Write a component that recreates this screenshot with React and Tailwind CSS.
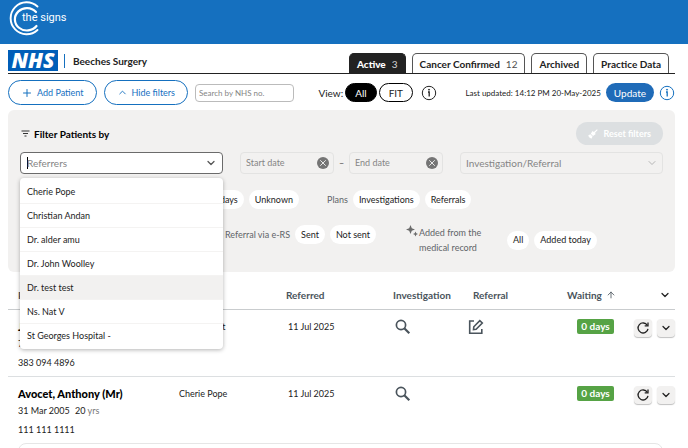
import React, { useState } from 'react'
import { ArrowUp, ChevronDown, ChevronUp, Plus, X } from 'lucide-react'

const referrers = [
  'Cherie Pope',
  'Christian Andan',
  'Dr. alder amu',
  'Dr. John Woolley',
  'Dr. test test',
  'Ns. Nat V',
  'St Georges Hospital -',
]

const tabs = [
  { name: 'Active', count: 3 },
  { name: 'Cancer Confirmed', count: 12 },
  { name: 'Archived' },
  { name: 'Practice Data' },
]

const patients = [
  { name: 'Jay, Alan (Mr)', dob: '7 Jan 1960', age: 65, nhs: '383 094 4896', referrer: 'Dr. test test', referred: '11 Jul 2025', referral: true },
  { name: 'Avocet, Anthony (Mr)', dob: '31 Mar 2005', age: 20, nhs: '111 111 1111', referrer: 'Cherie Pope', referred: '11 Jul 2025', referral: false },
]

const Logo = () => (
  <a href="#home" aria-label="C the signs" className="relative flex h-9 items-center pl-[14px] text-white">
    <svg viewBox="0 0 36 36" className="absolute top-0 left-0 size-9" fill="none" stroke="currentColor" strokeLinecap="round">
      <path d="M29.500 6.500A16 16 0 1 0 29.500 30" strokeWidth="1.900" />
      <path d="M28 12A12 11.200 0 1 0 28.500 26" strokeWidth="2.200" />
    </svg>
    <span className="relative font-[Roboto,sans-serif] text-[11px] leading-4">the signs</span>
  </a>
)

const Info = ({ label, className }) => (
  <button aria-label={label} className={className}>
    <svg viewBox="0 0 16 16" className="size-4" fill="none" stroke="currentColor">
      <circle cx="8" cy="8" r="6.700" />
      <path d="M7 7h1.200v4.400" strokeWidth="1.300" />
      <circle cx="8" cy="4.700" r=".5" fill="currentColor" />
    </svg>
  </button>
)

const Pill = ({ children }) => (
  <button className="h-[19px] rounded-full bg-white px-[6px] text-[#222] whitespace-nowrap">{children}</button>
)

const DateInput = ({ label }) => (
  <div className="flex h-[22px] w-[94px] items-center rounded border border-[#e3e3e2] pr-[4px] pl-[5px]">
    <input aria-label={label} placeholder={label} className="min-w-0 flex-1 outline-none placeholder:text-[#858585]" />
    <button aria-label={'Clear ' + label} className="flex size-3 items-center justify-center rounded-full bg-[#757575] text-white">
      <X size={10} strokeWidth={2} />
    </button>
  </div>
)

const ReferrerSelect = () => {
  const [value, setValue] = useState('')

  return (
    <div className="relative w-[203px]">
      <div className="flex h-[22px] items-center rounded border border-[#6b6b6b] bg-white pr-[5px] pl-[6px]">
        <span className="-mr-px h-3 w-px bg-black" />
        <input
          aria-label="Referrers"
          placeholder="Referrers"
          value={value}
          onChange={(e) => setValue(e.target.value)}
          className="min-w-0 flex-1 text-[10px] outline-none placeholder:text-[#858585]"
        />
        <ChevronDown size={12} strokeWidth={2.500} className="text-[#555]" />
      </div>
      <ul className="absolute top-[26px] left-0 z-10 w-full rounded-sm bg-white py-[2px] shadow-[0_1px_4px_rgba(0,0,0,0.3)]">
        {referrers.map((name) => (
          <li key={name} className="border-b border-[#f4f3f2] last:border-0">
            <button
              onClick={() => setValue(name)}
              className={name === 'Dr. test test' ? 'h-[23px] w-full bg-[#f2f1f0] px-[7px] text-left' : 'h-[23px] w-full px-[7px] text-left'}
            >
              {name}
            </button>
          </li>
        ))}
      </ul>
    </div>
  )
}

const Filters = () => (
  <section className="mt-[5px] h-[162px] rounded-md bg-[#f2f1f0] px-3 pt-3">
    <div className="flex items-center justify-between">
      <h2 className="flex items-center gap-[3px] text-[10px] font-bold text-black">
        <svg viewBox="0 0 11 11" className="size-[11px]" stroke="#333" fill="none">
          <path d="M1.500 3h8M3 5.500h5M4.500 8h2" />
        </svg>
        Filter Patients by
      </h2>
      <button className="flex h-[23px] items-center gap-[5px] rounded-full bg-[#dcdfe1] px-3 font-bold text-white">
        <svg viewBox="0 0 10 10" className="size-[10px]" fill="#fff">
          <path d="M9 .2l.7.700-2.800 3 .9 1.100-2.800 1.900-2.200-2.200L4.500 1.900l1.400 1zM2.300 5.200l2.300 2.300-1.200 2.300-1-.9-.3.400-.7-.700.3-.5-.6.100L.2 6.400z" />
        </svg>
        Reset filters
      </button>
    </div>

    <div className="mt-[7px] flex items-center justify-between">
      <ReferrerSelect />
      <div className="flex items-center gap-[5px]">
        <DateInput label="Start date" />
        <span className="w-[5px] text-center text-[#555]">–</span>
        <DateInput label="End date" />
      </div>
      <div className="relative w-[203px]">
        <select aria-label="Investigation/Referral" className="h-[22px] w-full appearance-none rounded border border-[#e3e3e2] pl-[5px] text-[10px] text-[#858585]">
          <option>Investigation/Referral</option>
        </select>
        <ChevronDown size={12} strokeWidth={2} className="pointer-events-none absolute top-[5px] right-[5px] text-[#b5b5b5]" />
      </div>
    </div>

    <div className="mt-4 flex items-center text-[#5f6468]">
      <div className="flex w-[279px] items-center justify-end gap-[5px]">
        <Pill>28 days</Pill>
        <Pill>Unknown</Pill>
      </div>
      <div className="ml-7 flex items-center gap-[5px]">
        Plans
        <Pill>Investigations</Pill>
        <Pill>Referrals</Pill>
      </div>
    </div>

    <div className="mt-4 flex items-start text-[#5f6468]">
      <div className="flex w-[356px] items-center justify-end gap-[5px]">
        Referral via e-RS
        <Pill>Sent</Pill>
        <Pill>Not sent</Pill>
      </div>
      <div className="ml-[30px] flex items-center gap-[5px]">
        <svg viewBox="0 0 12 12" className="-mr-1 size-3 self-start" fill="#6b6b6b">
          <path d="M4.500 0l1.300 3.200L9 4.500 5.800 5.800 4.500 9 3.200 5.800 0 4.500l3.200-1.300zM9.500 6.500l.8 1.700 1.700.8-1.700.8-.8 1.700-.8-1.700L7 9l1.700-.8z" />
        </svg>
        <p className="w-[83px] leading-[15px]">Added from the medical record</p>
        <Pill>All</Pill>
        <Pill>Added today</Pill>
      </div>
    </div>
  </section>
)

const PatientTable = () => (
  <table className="w-full table-fixed text-left text-[#222]">
    <colgroup>
      <col />
      <col className="w-[107px]" />
      <col className="w-[107px]" />
      <col className="w-[75px]" />
      <col className="w-[90px]" />
      <col className="w-[64px]" />
      <col className="w-[53px]" />
    </colgroup>
    <thead>
      <tr className="h-[37px] border-b border-[#c9ccce] text-[10px] text-[#4a545c]">
        <th className="pt-[9px] pl-[10px]">Patient</th>
        <th className="pt-[9px]"></th>
        <th className="pt-[9px]">Referred</th>
        <th className="pt-[9px]">Investigation</th>
        <th className="pt-[9px] pl-[5px]">Referral</th>
        <th className="pt-[9px] pl-[9px]">
          <span className="flex items-center gap-1">Waiting <ArrowUp size={10} strokeWidth={2} className="shrink-0" /></span>
        </th>
        <th className="pt-[9px] pr-1">
          <button aria-label="Expand all" className="ml-auto block text-[#222]"><ChevronDown size={12} strokeWidth={2.500} /></button>
        </th>
      </tr>
    </thead>
    <tbody>
      {patients.map((p) => (
        <tr key={p.nhs} className="border-b border-[#dcdfe1] align-top last:border-0">
          <td className="h-[67px] pt-[9px] pl-[10px]">
            <p className="text-[11px] leading-4 font-black text-black">{p.name}</p>
            <p className="mt-px leading-4">{p.dob} <span className="ml-[3px]">{p.age}</span> <span className="text-[#777]">yrs</span></p>
            <p className="mt-[3px] leading-4">{p.nhs}</p>
          </td>
          <td className="pt-[9px] leading-4">{p.referrer}</td>
          <td className="pt-[9px] pl-[2px] leading-4">{p.referred}</td>
          <td className="pt-[9px] pl-[2px]">
            <svg viewBox="0 0 16 16" className="size-4" fill="none" stroke="#4a545c">
              <circle cx="6" cy="6" r="4.600" strokeWidth="1.700" />
              <path d="M9.300 9.300l5 5" strokeWidth="2.200" />
            </svg>
          </td>
          <td className="pt-[9px]">
            {p.referral && (
              <svg viewBox="0 0 16 16" className="size-4" fill="none" stroke="#4a545c" strokeWidth="1.600">
                <path d="M6 2H1.700v12.300h12.100V10" />
                <path d="M5.500 10.500l.3-2.700 6-6.200 2.500 2.400-6.200 6.200z" />
              </svg>
            )}
          </td>
          <td className="pt-[9px] pr-2">
            <span className="ml-auto block h-[15px] w-[37px] rounded-xs bg-[#56a345] text-center text-[10px] leading-[15px] font-bold text-white">0 days</span>
          </td>
          <td className="pt-[9px]">
            <div className="flex justify-end gap-[5px] text-[#222]">
              <button aria-label="Refresh" className="flex size-[18px] items-center justify-center rounded bg-[#f2f1f0] shadow-[0_1px_1px_rgba(0,0,0,0.25)]">
                <svg viewBox="0 0 14 14" className="size-[14px]" fill="none" stroke="currentColor" strokeWidth="1.300">
                  <path d="M11.300 4.300A5 5 0 1 0 12 7.800" />
                  <path d="M12 1.500v3.300H8.700" />
                </svg>
              </button>
              <button aria-label="Expand" className="flex size-[18px] items-center justify-center rounded bg-[#f2f1f0] shadow-[0_1px_1px_rgba(0,0,0,0.25)]">
                <ChevronDown size={12} strokeWidth={2.500} />
              </button>
            </div>
          </td>
        </tr>
      ))}
    </tbody>
  </table>
)

const App = () => {
  const [tab, setTab] = useState('Active')

  return (
    <div className="h-screen overflow-hidden bg-white font-[Lato,sans-serif] text-[9px] leading-4 text-[#222]">
      <header className="h-11 bg-[#1570bf] px-2">
        <Logo />
      </header>

      <main className="pr-[13px] pl-2">
        <div className="flex h-[30px] items-end justify-between border-b border-[#222] text-[10px]">
          <div className="flex items-center pb-[2px]">
            <span className="flex h-[21px] w-[50px] items-center justify-center bg-[#005eb8] font-['Open_Sans',sans-serif] text-[21px] leading-[21px] font-extrabold text-white italic">
              NHS
            </span>
            <span className="ml-[6px] h-[14px] w-px bg-[#1570bf]" />
            <h1 className="ml-2 font-bold text-[#222]">Beeches Surgery</h1>
          </div>
          <nav className="flex gap-[6px] pr-[6px]">
            {tabs.map((t) => (
              <button
                key={t.name}
                onClick={() => setTab(t.name)}
                className={
                  t.name === tab
                    ? 'h-5 rounded-t-[5px] border border-b-0 border-[#222] bg-[#222] px-[7px] font-black text-white'
                    : 'h-5 rounded-t-[5px] border border-b-0 border-[#555] px-[7px] font-bold text-[#222]'
                }
              >
                {t.name}
                {t.count && <span className="ml-[6px] font-normal opacity-80">{t.count}</span>}
              </button>
            ))}
          </nav>
        </div>

        <div className="mt-[6px] flex h-[25px] items-center justify-between">
          <div className="flex items-center gap-[7px]">
            <button className="flex h-[25px] items-center gap-1 rounded-full border border-[#1570bf] px-3 text-[#1570bf]">
              <Plus size={12} strokeWidth={2} />
              Add Patient
            </button>
            <button className="flex h-[25px] items-center gap-1 rounded-full border border-[#1570bf] px-3 text-[#1570bf]">
              <ChevronUp size={11} strokeWidth={2} />
              Hide filters
            </button>
            <input
              aria-label="Search by NHS no."
              placeholder="Search by NHS no."
              className="h-[18px] w-[99px] rounded border border-[#bbb] px-[3px] text-[8px] outline-none placeholder:text-[#858585]"
            />
          </div>
          <div className="flex items-center gap-[2px] pr-1 text-[10px]">
            View:
            <button className="h-[19px] rounded-full border border-black bg-black px-[9px] text-white">All</button>
            <button className="h-[19px] rounded-full border border-black px-[9px]">FIT</button>
            <Info label="About views" className="ml-[6px]" />
          </div>
          <div className="flex items-center gap-[5px]">
            <span className="text-[8px]">Last updated: 14:12 PM 20-May-2025</span>
            <button className="h-[19px] rounded-full bg-[#1f6bb8] px-2 text-[10px] text-white">Update</button>
            <Info label="About updates" className="text-[#1570bf]" />
          </div>
        </div>

        <Filters />
        <PatientTable />
        <div className="mr-3 ml-[10px] h-8 rounded-lg border border-[#e6e6e6]" />
      </main>
    </div>
  )
}

export default App
